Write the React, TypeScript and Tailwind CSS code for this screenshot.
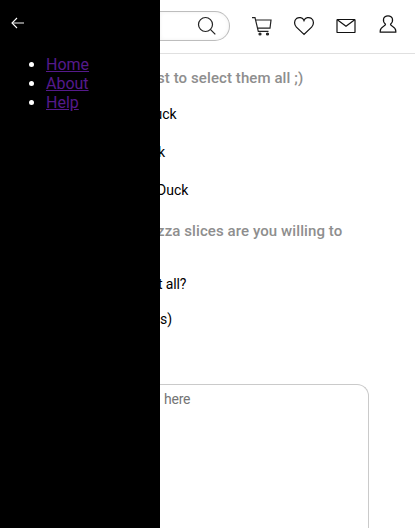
import React from "react";

const links = ["Home", "About", "Help"];

function Sidebar() {
  return (
    <aside className="z-10 h-full w-40 shrink-0 bg-black text-white">
      <svg className="ml-[11px] mt-[17px] block" width="14" height="12" viewBox="0 0 14 12" fill="none" stroke="white">
        <path d="M1 6H13" strokeOpacity=".65" strokeWidth="1.5" />
        <path d="M6 1L1 6L6 11" strokeWidth="1.1" />
      </svg>
      <ul className="mt-[26px] list-disc pl-[46px] text-[16px] leading-[19px]">
        {links.map((label) => (
          <li key={label}>
            <a href="#" className="text-[#551a8b] underline">{label}</a>
          </li>
        ))}
      </ul>
    </aside>
  );
}

function Header() {
  return (
    <header className="flex h-[54px] shrink-0 border-b border-[#e0e0e0]">
      <div className="mt-[11px] flex h-[30px] w-[70px] items-start rounded-r-[15px] border border-l-0 border-[#bdbdbd] pl-[37px] pt-[4px] shadow-[inset_0_0_4px_rgba(0,0,0,0.06)]">
        <svg width="20" height="20" viewBox="0 0 20 20" fill="none" stroke="#222" strokeWidth="1.2">
          <circle cx="8.5" cy="8.5" r="7" />
          <path d="M13.3 13.3L18.3 18.3" />
        </svg>
      </div>
      <svg className="ml-[21px] mt-[16px]" width="22" height="20" viewBox="0 0 22 20" fill="none" stroke="#222" strokeWidth="1.2">
        <path d="M1 1.7H4L7.3 15.3H17.5M4.8 4H20L19 12.2H6.5" />
        <circle cx="9" cy="18" r="1" fill="#444" />
        <circle cx="16.5" cy="18" r="1" fill="#444" />
      </svg>
      <svg className="ml-[21px] mt-[16px]" width="20" height="20" viewBox="0 0 20 20" fill="none" stroke="#111" strokeWidth="1.2">
        <path d="M10 18.4L2.4 11.2C-.2 8.2 .2 4.4 2.4 2.6C4.8.8 8.7 1.2 10 4.6C11.3 1.2 15.2.8 17.6 2.6C19.8 4.4 20.2 8.2 17.6 11.2Z" />
      </svg>
      <svg className="ml-[22px] mt-[18px]" width="20" height="16" viewBox="0 0 20 16" fill="none" stroke="#111" strokeWidth="1.2">
        <rect x="1" y="1.5" width="18" height="13" rx=".6" />
        <path d="M1.3 1.8L10 8.3L18.7 1.8" />
      </svg>
      <svg className="ml-[23px] mt-[14px]" width="18" height="20" viewBox="0 0 18 20" fill="none" stroke="#111" strokeWidth="1.2">
        <path d="M6.5 10.2C3.2 7.4 3.8 1.8 9 1.8C14.2 1.8 14.8 7.4 11.5 10.2C11.3 12.4 16.8 12.2 16.8 17V18.2H1.2V17C1.2 12.2 6.7 12.4 6.5 10.2Z" />
      </svg>
    </header>
  );
}

export default function App() {
  return (
    <div className="flex h-[528px] w-full overflow-hidden bg-white font-['Roboto',sans-serif] text-black">
      <Sidebar />
      <main className="flex min-w-0 flex-1 flex-col overflow-hidden whitespace-nowrap text-[14px] leading-4">
        <Header />
        <h2 className="ml-[-3px] mt-[15px] text-[15px] font-medium leading-[18px] tracking-[0.09px] text-[#8e8e8e]">st to select them all ;)</h2>
        <p className="ml-[-5.5px] mt-[19px]">uck</p>
        <p className="ml-[-2px] mt-[22px]">k</p>
        <p className="ml-[-3px] mt-[22px]">Duck</p>
        <h2 className="ml-[-3px] mt-[24px] text-[15px] font-medium leading-[18px] tracking-[0.09px] text-[#8e8e8e]">zza slices are you willing to</h2>
        <p className="ml-[-2px] mt-[36px] tracking-[-0.15px]">t all?</p>
        <p className="mt-[19px]">s)</p>
        <div className="mt-[57px] h-[160px] w-[209px] shrink-0 rounded-tr-[12px] border-r border-t border-[#cacaca] pl-1 pt-[6px] tracking-[-0.25px] text-[#757575]">
          here
        </div>
      </main>
    </div>
  );
}
